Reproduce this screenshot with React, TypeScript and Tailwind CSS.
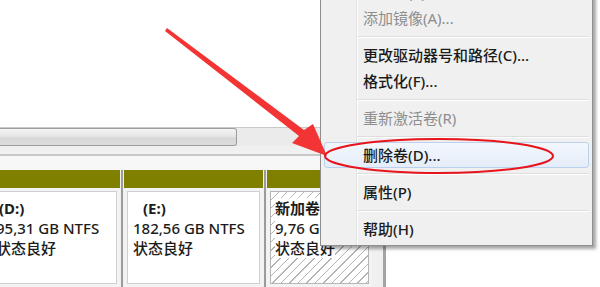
import React from 'react';

type MenuEntry =
  | { kind: 'item'; label: string; disabled?: boolean; active?: boolean }
  | { kind: 'sep' };

const MENU: MenuEntry[] = [
  { kind: 'item', label: '扩展卷(X)...', disabled: true },
  { kind: 'item', label: '添加镜像(A)...', disabled: true },
  { kind: 'sep' },
  { kind: 'item', label: '更改驱动器号和路径(C)...' },
  { kind: 'item', label: '格式化(F)...' },
  { kind: 'sep' },
  { kind: 'item', label: '重新激活卷(R)', disabled: true },
  { kind: 'sep' },
  { kind: 'item', label: '删除卷(D)...', active: true },
  { kind: 'sep' },
  { kind: 'item', label: '属性(P)' },
  { kind: 'sep' },
  { kind: 'item', label: '帮助(H)' },
];

const FONT = "font-['Noto_Sans','Noto_Sans_CJK_SC',sans-serif]";

const Divider = () => (
  <div className="w-[4px] flex justify-center bg-[#f0f0f0]">
    <div className="w-[2px] bg-[#9b9b9b]" />
  </div>
);

const Olive = () => <div className="h-[18px] bg-[#808000]" />;

const Lines = ({ label, size, status, indent, hatched }: { label: string; size: string; status: string; indent: string; hatched?: boolean }) => (
  <div className="flex flex-col items-start pt-[6px] text-[15px] leading-[20px] font-medium text-[#1c1c1c]">
    <span className={`font-bold ${indent} ${hatched ? 'bg-white' : ''}`}>{label}</span>
    <span className={`whitespace-nowrap ${hatched ? 'bg-white' : ''}`}>{size}</span>
    <span className={hatched ? 'bg-white' : ''}>{status}</span>
  </div>
);

const ContextMenu = () => (
  <div className="absolute left-[320px] top-[-25px] w-[273px] border border-[#8e8e8e] bg-[#f0f0f0] pl-[3px] pr-[3px] py-[3px] shadow-[3px_3px_3px_rgba(0,0,0,0.35)]">
    <div className="absolute left-[35px] top-0 bottom-0 w-[1px] bg-[#e3e3e3]" />
    <div className="absolute left-[36px] top-0 bottom-0 w-[1px] bg-white" />
    {MENU.map((m, i) =>
      m.kind === 'sep' ? (
        <div key={i} className="relative h-[11px] flex flex-col justify-center ml-[33px]">
          <div className="h-[1px] bg-[#dedede]" />
          <div className="h-[1px] bg-white" />
        </div>
      ) : (
        <div
          key={i}
          className={`relative h-[26px] flex items-center pl-[38px] rounded-[3px] border text-[15px] whitespace-nowrap ${
            m.active
              ? 'border-[#b9d1ee] bg-[linear-gradient(#f3f7fd,#e4edf8)]'
              : 'border-transparent'
          } ${m.disabled ? 'text-[#8d8d8d]' : 'text-[#1b1b1b] font-medium'}`}
        >
          {m.label}
        </div>
      )
    )}
  </div>
);

export default function App() {
  return (
    <div className={`relative w-[600px] h-[287px] overflow-hidden bg-white ${FONT}`}>
      {/* disk map panel */}
      <div className="w-[386px] flex flex-col">
        <div className="h-[127px] bg-white" />

        {/* horizontal scrollbar */}
        <div className="h-[19px] flex bg-[#ebebeb] border-t border-[#c9c9c9]">
          <div className="w-[237px] rounded-r-[3px] border border-l-0 border-[#9d9d9d] bg-[linear-gradient(#f4f4f4,#e4e4e4_50%,#d6d6d6_55%,#dedede)]" />
          <div className="flex-1" />
        </div>
        <div className="h-[8px] bg-[#f0f0f0]" />
        <div className="h-[2px] bg-[#c8c8c8]" />
        <div className="h-[14px] bg-[#f7f7f7]" />

        {/* partitions */}
        <div className="h-[117px] flex bg-[#f3f3f3]">
          <div className="w-[150px] -ml-[30px] flex flex-col">
            <Olive />
            <div className="flex-1 p-[3px]">
              <div className="h-full border border-[#cfcfcf] bg-white pl-[22px]">
                <Lines label="(D:)" size="95,31 GB NTFS" status="状态良好" indent="ml-[3px]" />
              </div>
            </div>
          </div>
          <Divider />
          <div className="w-[139px] flex flex-col">
            <Olive />
            <div className="flex-1 p-[3px]">
              <div className="h-full border border-[#cfcfcf] bg-white pl-[5px]">
                <Lines label="(E:)" size="182,56 GB NTFS" status="状态良好" indent="ml-[10px]" />
              </div>
            </div>
          </div>
          <Divider />
          <div className="w-[105px] flex flex-col">
            <Olive />
            <div className="flex-1 p-[3px]">
              <div className="h-full border border-[#b5b5b5] pl-[4px] bg-[repeating-linear-gradient(135deg,#ffffff_0px,#ffffff_5px,#b4b4b4_5px,#b4b4b4_6px)] overflow-hidden">
                <Lines label="新加卷" size="9,76 GB NTFS" status="状态良好" indent="" hatched />
              </div>
            </div>
          </div>
          <div className="flex-1 bg-[#f0f0f0] border-r-[3px] border-[#a3a3a3]" />
        </div>
      </div>

      <ContextMenu />

      {/* annotation: red arrow + ellipse */}
      <svg className="absolute inset-0 pointer-events-none" width="600" height="287" viewBox="0 0 600 287">
        <polygon
          points="167,28 304,130 313,124 327,156 292,143 299,136 165,31"
          fill="#f23434"
        />
        <ellipse cx="439" cy="156" rx="114" ry="17" fill="none" stroke="#e8141c" strokeWidth="2" />
      </svg>
    </div>
  );
}
